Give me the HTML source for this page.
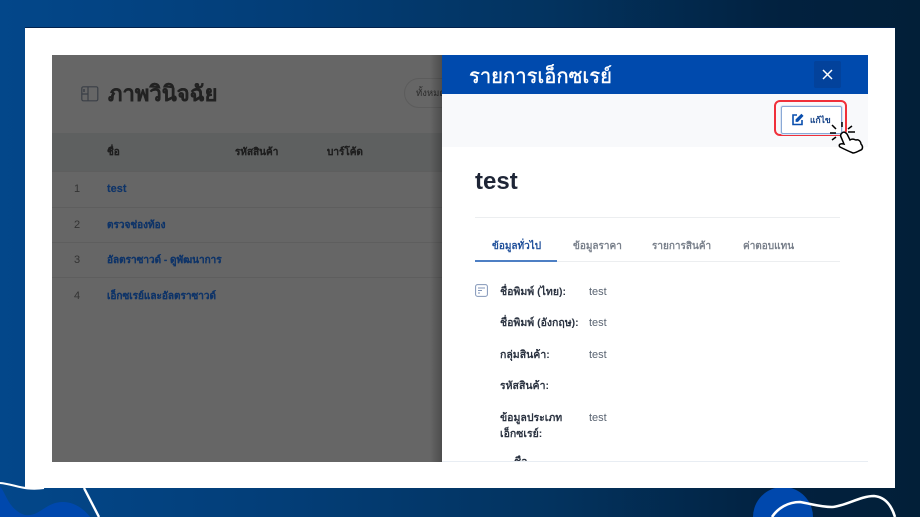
<!DOCTYPE html>
<html lang="th">
<head>
<meta charset="utf-8">
<style>
html,body{margin:0;padding:0;overflow:hidden}
body{width:920px;height:517px;overflow:hidden;position:relative;background:linear-gradient(90deg,#03478a 0%,#033e78 30%,#03335f 60%,#02213f 85%,#021f38 100%);font-family:"Liberation Sans","DejaVu Sans",sans-serif}
.a{position:absolute;white-space:nowrap}
#card{left:25px;top:28px;width:870px;height:460px;background:#fff;box-shadow:0 -1px 0 #02234f}
#shot{left:52px;top:55px;width:816px;height:407px;background:#666;overflow:hidden}
.b{font-weight:700}
.link{color:#0f3468;font-size:10px;line-height:14px;font-weight:700;-webkit-text-stroke:.15px #0f3468}
.lab{color:#2a3240;font-size:10.5px;line-height:14px;font-weight:700}
.val{color:#5a6472;font-size:11px;line-height:14px}
.line{position:absolute;background:#5e5e5e;height:1px;left:0;width:390px}
.tab{font-size:10px;line-height:14px;font-weight:700;color:#7a818c}
.num{font-size:11px;line-height:14px;color:#333;left:22px}
.th{font-size:10px;line-height:14px;font-weight:700;color:#1f1f1f;-webkit-text-stroke:.15px #1f1f1f}
</style>
</head>
<body>
<svg class="a" style="left:0;top:460px" width="160" height="57" viewBox="0 0 160 57">
<path d="M0 27C5 30 8 50 25 55C40 57 45 42 63 42C75 42 85 50 90 57H0Z" fill="#0048ad"/>
<path d="M0 23C14 24 24 31 44 28" fill="none" stroke="#fff" stroke-width="2"/>
<path d="M84 28L99 57" fill="none" stroke="#fff" stroke-width="2.4"/>
</svg>
<svg class="a" style="left:740px;top:470px" width="180" height="47" viewBox="0 0 180 47">
<path d="M13 47A30 30 0 0 1 73 47Z" fill="#0048ad"/>
<path d="M32 47C38 38 48 32 60 32C72 34 80 37 92 37C106 36 120 26 134 26C146 27 152 37 155 47" fill="none" stroke="#fff" stroke-width="2.6"/>
</svg>
<div class="a" id="card"></div>
<div class="a" id="shot">
  <svg class="a" style="left:29px;top:31px" width="18" height="16" viewBox="0 0 18 16" fill="none" stroke="#3a3f46" stroke-width="1.2"><rect x=".8" y=".8" width="16" height="14" rx="1.5"/><path d="M7 1V15M1 8H7"/><path d="M3 3V6" stroke-width="1.5"/></svg>
  <div class="a b" style="left:56px;top:25px;font-size:22px;line-height:28px;color:#222;-webkit-text-stroke:.2px #222">ภาพวินิจฉัย</div>
  <div class="a" style="left:352px;top:23px;width:60px;height:28px;border:1px solid #5c5c5c;border-radius:15px"></div>
  <div class="a" style="left:364px;top:32px;font-size:9.5px;line-height:13px;color:#2b2b2b">ทั้งหมด</div>
  <div class="a" style="left:0;top:78px;width:390px;height:38px;background:#5e6060"></div>
  <div class="a th" style="left:55px;top:91px">ชื่อ</div>
  <div class="a th" style="left:183px;top:91px">รหัสสินค้า</div>
  <div class="a th" style="left:275px;top:91px">บาร์โค้ด</div>
  <div class="line" style="top:116px"></div><div class="line" style="top:152px"></div><div class="line" style="top:187px"></div><div class="line" style="top:222px"></div>
  <div class="a num" style="top:127px">1</div>
  <div class="a num" style="top:163px">2</div>
  <div class="a num" style="top:198px">3</div>
  <div class="a num" style="top:234px">4</div>
  <div class="a link" style="left:55px;top:127px;font-size:11px">test</div>
  <div class="a link" style="left:55px;top:164px">ตรวจช่องท้อง</div>
  <div class="a link" style="left:55px;top:199px">อัลตราซาวด์ - ดูพัฒนาการ</div>
  <div class="a link" style="left:55px;top:235px">เอ็กซเรย์และอัลตราซาวด์</div>
  <div class="a" style="left:378px;top:0;width:12px;height:407px;background:linear-gradient(90deg,rgba(0,0,0,0),rgba(0,0,0,.25))"></div>
  <div class="a" id="panel" style="left:390px;top:0;width:426px;height:407px;background:#fff;overflow:hidden">
    <div class="a" style="left:0;top:0;width:426px;height:39px;background:#004aad"></div>
    <div class="a" style="left:27px;top:9px;font-size:20.2px;line-height:27px;color:#fff;-webkit-text-stroke:.4px #fff">รายการเอ็กซเรย์</div>
    <div class="a" style="left:372px;top:6px;width:27px;height:27px;background:#03429b;border-radius:2px"></div>
    <svg class="a" style="left:380px;top:14px" width="11" height="11" viewBox="0 0 11 11"><path d="M1 1L10 10M10 1L1 10" stroke="#fff" stroke-width="1.5" fill="none"/></svg>
    <div class="a" style="left:0;top:39px;width:426px;height:53px;background:#f8f9fb"></div>
    <div class="a" style="left:332px;top:45px;width:73px;height:36px;border:2px solid #f0303a;border-radius:6px;box-sizing:border-box"></div>
    <div class="a" style="left:339px;top:51px;width:59px;height:26px;border:1px solid #8aa9d6;border-radius:2px;background:#fff;box-shadow:0 0 0 1px #dce6f4"></div>
    <svg class="a" style="left:349px;top:58px" width="13" height="13" viewBox="0 0 13 13" fill="none" stroke="#0a4fae" stroke-width="1.6"><path d="M6 2H2V11.5H11V7"/><path d="M5 8.5V6.6L10.4 1.3L12 2.9L6.8 8.5Z" fill="#0a4fae" stroke-width=".8"/></svg>
    <div class="a b" style="left:368px;top:58px;font-size:8.5px;line-height:14px;color:#103f86">แก้ไข</div>
    <svg class="a" style="left:386px;top:65px" width="40" height="35" viewBox="0 0 40 35" fill="none" stroke="#000" stroke-width="1.5">
      <path d="M14 7V2M8 9L4 5M20 9L24 6M8 13H2M20 12H27M8 17L4 20"/>
      <path d="M14 13C16 11 19 13 20 16L22 20C25 18 27 20 28 20C31 19 33 22 33 24C35 26 35 29 33 30C30 31 28 33 25 33C20 31 16 29 12 27C10 25 12 23 16 24L13 17C12 15 13 14 14 13Z" fill="#fff"/>
    </svg>
    <div class="a" style="left:33px;top:112px;font-size:24px;line-height:30px;font-weight:700;color:#1e2536">test</div>
    <div class="a" style="left:33px;top:162px;width:365px;height:1px;background:#eceef0"></div>
    <div class="a" style="left:33px;top:206px;width:365px;height:1px;background:#eceef0"></div>
    <div class="a" style="left:33px;top:205px;width:82px;height:2px;background:#4d7fc4"></div>
    <div class="a tab" style="left:50px;top:185px;color:#1f4f9a">ข้อมูลทั่วไป</div>
    <div class="a tab" style="left:131px;top:185px">ข้อมูลราคา</div>
    <div class="a tab" style="left:210px;top:185px">รายการสินค้า</div>
    <div class="a tab" style="left:301px;top:185px">ค่าตอบแทน</div>
    <svg class="a" style="left:33px;top:229px" width="13" height="13" viewBox="0 0 13 13" fill="none" stroke="#8296b8" stroke-width="1"><rect x=".6" y=".6" width="11.8" height="11.8" rx="2"/><path d="M3 4H10M3 6.5H7M3 9H5"/></svg>
    <div class="a lab" style="left:58px;top:230px">ชื่อพิมพ์ (ไทย):</div>
    <div class="a val" style="left:147px;top:230px">test</div>
    <div class="a lab" style="left:58px;top:261px">ชื่อพิมพ์ (อังกฤษ):</div>
    <div class="a val" style="left:147px;top:261px">test</div>
    <div class="a lab" style="left:58px;top:293px">กลุ่มสินค้า:</div>
    <div class="a val" style="left:147px;top:293px">test</div>
    <div class="a lab" style="left:58px;top:324px">รหัสสินค้า:</div>
    <div class="a lab" style="left:58px;top:356px">ข้อมูลประเภท</div>
    <div class="a lab" style="left:58px;top:372px">เอ็กซเรย์:</div>
    <div class="a val" style="left:147px;top:356px">test</div>
    <div class="a" style="left:72px;top:400px;height:6px;overflow:hidden"><div class="lab">ชื่อ</div></div>
    <div class="a" style="left:0;top:406px;width:426px;height:1px;background:#e8edf3"></div>
  </div>
</div>
</body>
</html>
